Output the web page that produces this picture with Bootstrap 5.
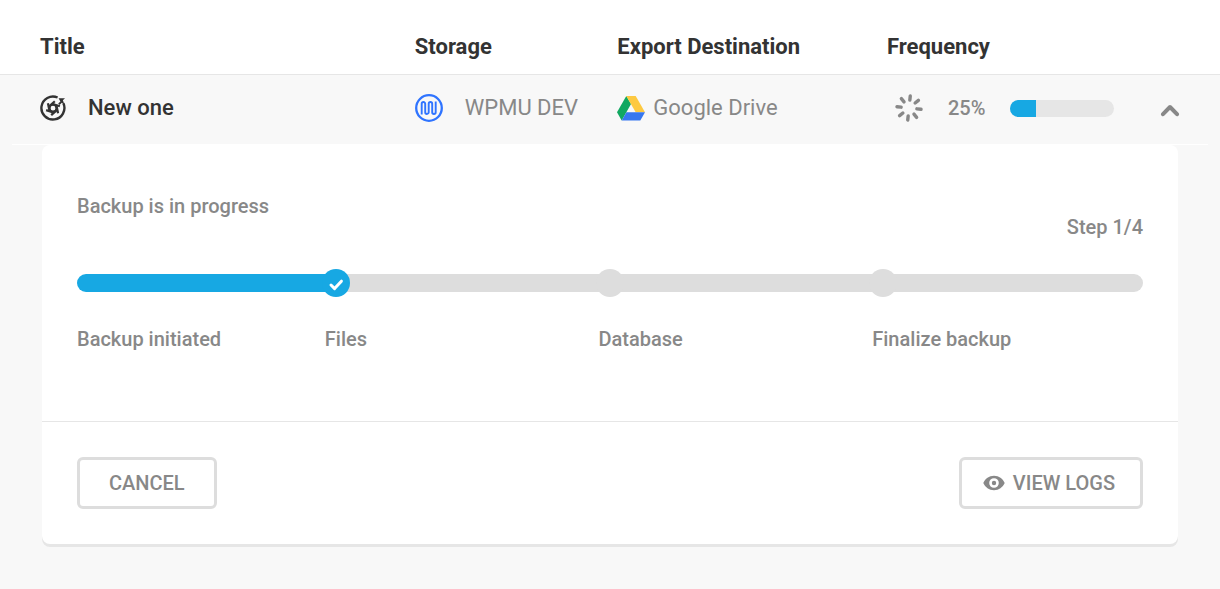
<!DOCTYPE html>
<html lang="en">
<head>
<meta charset="utf-8">
<meta name="viewport" content="width=device-width, initial-scale=1">
<title>Backups</title>
<link href="https://cdn.jsdelivr.net/npm/bootstrap@5.3.0/dist/css/bootstrap.min.css" rel="stylesheet">
<style>
  body { font-family: Roboto, "Liberation Sans", sans-serif; font-size: 20px; line-height: 30px; font-weight: 500; color: #888; background: #f8f8f8; }
  .backups { table-layout: fixed; --bs-table-bg: transparent; --bs-table-color: #888; color: #888; }
  .backups > * > tr > * { padding: 0; border: 0; vertical-align: middle; color: #888; }
  .backups > thead > tr > th { height: 74px; padding-top: 19px; background: #fff; box-shadow: inset 0 -1px 0 #fff, 0 1px 0 #e6e6e6; color: #333; font-size: 22px; font-weight: 700; }
  .backups > tbody > .summary > * { height: 70px; padding-bottom: 2px; font-size: 22px; font-weight: 400; }
  .backups > * > tr > th:first-child { padding-left: 40px; }
  .backup-name { color: #333; font-weight: 500; }
  .col-title { width: 34%; } .col-storage { width: 16.6%; } .col-export { width: 22.1%; }
  .backups svg { flex: none; }
  .icon-row { gap: 22px; }
  .frequency-row { gap: 25px; }
  .mini-progress { width: 104px; height: 17px; border-radius: 9px; background: #e6e6e6; }
  .progress-bar { background: #17a8e3; }
  .percent { font-size: 20px; font-weight: 500; }
  .toggle-btn { color: #888; line-height: 0; }
  .detail-wrap { margin: 0 12px; padding: 0 30px 42px; border-top: 1px solid #fff; }
  .detail { background: #fff; border-radius: 8px; box-shadow: 0 3px 0 #e6e6e6; }
  .detail-body { padding: 51px 35px 66px; height: 276px; }
  .status-line { margin: 0; line-height: 21px; }
  .steps { display: grid; grid-template-columns: 245fr 274fr 274fr 274fr; margin-top: 31px; }
  .step-track { position: relative; height: 28px; }
  .step-track::before { content: ""; position: absolute; inset: 5px 0; background: #ddd; }
  .steps li:first-child .step-track::before { right: -14px; z-index: 1; background: #17a8e3; border-radius: 9px 0 0 9px; }
  .steps li:last-child .step-track::before { border-radius: 0 9px 9px 0; }
  .step-dot { position: relative; z-index: 2; width: 28px; height: 28px; border-radius: 50%; background: #ddd; }
  .step-dot.done { background: #17a8e3; }
  .step-label { margin-top: 27px; }
  .steps li + li .step-label { padding-left: 3px; }
  .detail-foot { border-top: 1px solid #e6e6e6; padding: 35px; }
  .btn-ghost { --bs-btn-color: #888; --bs-btn-border-color: #ddd; --bs-btn-border-width: 3px; --bs-btn-border-radius: 6px; --bs-btn-font-size: 20px; --bs-btn-font-weight: 500; --bs-btn-line-height: 30px; --bs-btn-padding-y: 8px; --bs-btn-padding-x: 29px; --bs-btn-hover-color: #666; --bs-btn-hover-border-color: #bbb; }
  .btn-logs { padding-left: 21px; padding-right: 25px; }
</style>
</head>
<body>
<table class="table backups w-100 mb-0">
  <colgroup><col class="col-title"><col class="col-storage"><col class="col-export"><col></colgroup>
  <thead>
    <tr><th scope="col">Title</th><th scope="col">Storage</th><th scope="col">Export Destination</th><th scope="col">Frequency</th></tr>
  </thead>
  <tbody>
    <tr class="summary">
      <th scope="row">
        <div class="d-flex align-items-center icon-row backup-name">
          <svg width="26" height="26" viewBox="0 0 26 26" aria-hidden="true">
            <path d="M17.6 2.5A11.5 11.5 0 1 0 23.4 8.3" fill="none" stroke="#333" stroke-width="2.4"/>
            <path d="M18.6 3.2h6.4L22.9 5.3l1.5 4.2-2.6-1.7-2.200 2.200-1.400-1.400 2.200-2.200z" fill="#333"/>
            <g stroke="#333" stroke-width="2.2" fill="none"><circle cx="13" cy="13.2" r="3.500"/><path id="blade" d="M9.200 11.300 14.800 6.300"/><use href="#blade" transform="rotate(60 13 13.2)"/><use href="#blade" transform="rotate(120 13 13.2)"/><use href="#blade" transform="rotate(180 13 13.2)"/><use href="#blade" transform="rotate(240 13 13.2)"/><use href="#blade" transform="rotate(300 13 13.2)"/></g>
          </svg>
          <span>New one</span>
        </div>
      </th>
      <td>
        <div class="d-flex align-items-center icon-row">
          <svg width="28" height="28" viewBox="0 0 28 28" fill="none" stroke="#2f74ff" aria-hidden="true">
            <circle cx="14" cy="14" r="12.8" stroke-width="2.3"/>
            <path d="M6.7 20.4V9.8a1.75 1.75 0 0 1 3.5 0v8.4a1.75 1.75 0 0 0 3.5 0V9.8a1.75 1.75 0 0 1 3.5 0v8.4a1.75 1.75 0 0 0 3.5 0V7.6" stroke-width="1.9"/>
          </svg>
          <span>WPMU DEV</span>
        </div>
      </td>
      <td>
        <div class="d-flex align-items-center gap-2">
          <svg width="28" height="25" viewBox="0 0 28 25" aria-hidden="true">
            <path d="M9.3 0 14 8.1 4.7 24.4 0 16.2z" fill="#11a861"/>
            <path d="M9.3 0h9.4L28 16.2h-9.3z" fill="#fdc941"/>
            <path d="M9.4 16.2H28l-4.7 8.2H4.7z" fill="#3777f0"/>
          </svg>
          <span>Google Drive</span>
        </div>
      </td>
      <td>
        <div class="d-flex align-items-center frequency-row ps-2 pe-4">
          <svg width="28" height="28" viewBox="0 0 28 28" stroke="#888" stroke-width="3.4" stroke-linecap="round" aria-hidden="true">
            <g transform="rotate(6 14 14)"><path id="spoke" d="M14 1.9v4.2"/><use href="#spoke" transform="rotate(45 14 14)"/><use href="#spoke" transform="rotate(90 14 14)"/><use href="#spoke" transform="rotate(135 14 14)"/><use href="#spoke" transform="rotate(180 14 14)"/><use href="#spoke" transform="rotate(225 14 14)"/><use href="#spoke" transform="rotate(270 14 14)"/><use href="#spoke" transform="rotate(315 14 14)"/></g>
          </svg>
          <span class="percent">25%</span>
          <div class="progress mini-progress" role="progressbar" aria-label="Backup progress" aria-valuenow="25" aria-valuemin="0" aria-valuemax="100"><div class="progress-bar" style="width:25%"></div></div>
          <button type="button" class="btn p-0 border-0 toggle-btn ms-auto me-3 mt-1" aria-expanded="true" aria-controls="detail" aria-label="Collapse details">
            <svg width="20" height="13" viewBox="0 0 20 13" fill="none" stroke="currentColor" stroke-width="4" stroke-linecap="round" stroke-linejoin="round"><path d="M3 10.2 10 3l7 7.2"/></svg>
          </button>
        </div>
      </td>
    </tr>
    <tr>
      <td colspan="4">
        <div class="detail-wrap">
          <div class="detail" id="detail">
            <div class="detail-body">
              <p class="status-line">Backup is in progress</p>
              <p class="status-line text-end">Step 1/4</p>
              <ol class="steps list-unstyled mb-0">
                <li><div class="step-track"></div><div class="step-label">Backup initiated</div></li>
                <li><div class="step-track"><div class="step-dot done"><svg class="d-block" width="28" height="28" viewBox="0 0 28 28" fill="none" stroke="#fff" stroke-width="3" stroke-linecap="round" stroke-linejoin="round" aria-hidden="true"><path d="m9 16 3.6 3.6 6.8-7.4"/></svg></div></div><div class="step-label">Files</div></li>
                <li><div class="step-track"><div class="step-dot"></div></div><div class="step-label">Database</div></li>
                <li><div class="step-track"><div class="step-dot"></div></div><div class="step-label">Finalize backup</div></li>
              </ol>
            </div>
            <div class="detail-foot d-flex justify-content-between">
              <button type="button" class="btn btn-ghost">CANCEL</button>
              <button type="button" class="btn btn-ghost btn-logs d-flex align-items-center gap-2">
                <svg width="22" height="16" viewBox="0 0 22 16" aria-hidden="true"><path fill="currentColor" fill-rule="evenodd" d="M11 .8C6 .8 2.2 3.8.3 8c1.9 4.2 5.7 7.2 10.7 7.2S19.8 12.2 21.7 8C19.8 3.8 16 .8 11 .8zM11 3.2a4.8 4.8 0 1 1 0 9.6 4.8 4.8 0 0 1 0-9.6z"/><circle cx="11" cy="8" r="2.2" fill="currentColor"/></svg>
                VIEW LOGS
              </button>
            </div>
          </div>
        </div>
      </td>
    </tr>
  </tbody>
</table>
<script src="https://cdn.jsdelivr.net/npm/bootstrap@5.3.0/dist/js/bootstrap.bundle.min.js"></script>
</body>
</html>
